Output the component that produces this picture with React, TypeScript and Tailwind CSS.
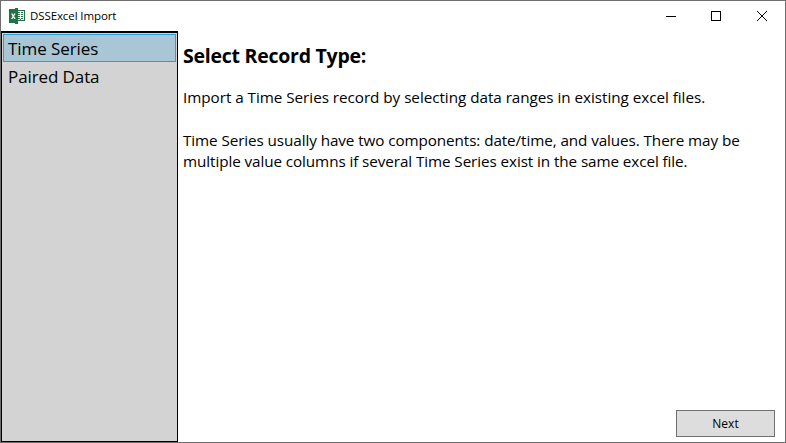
const recordTypes = ["Time Series", "Paired Data"];

function ExcelIcon() {
  return (
    <svg width="16" height="16" viewBox="0 0 16 16" shapeRendering="crispEdges">
      <path d="M9 2h7v11H9z" fill="#217346" />
      <path
        d="M9 3h2v1H9zM12 3h3v1h-3zM9 5h2v1H9zM12 5h2v1h-2zM9 7h2v1H9zM12 7h2v1h-2zM9 9h2v1H9zM12 9h2v1h-2zM9 11h2v1H9zM12 11h3v1h-3zM14 3h1v9h-1zM11 3h1v8h-1z"
        fill="#fff"
      />
      <path d="M0 1.5L9 0v16l-9-1.5z" fill="#217346" />
      <path
        d="M2.7 5.5l3.3 5.5M6 5.5L2.7 11"
        stroke="#fff"
        strokeWidth="1.4"
        shapeRendering="auto"
      />
    </svg>
  );
}

function TitleBar() {
  return (
    <div className="flex h-[30px] items-center pl-2">
      <ExcelIcon />
      <span className="ml-[5px] text-[11.5px] tracking-[-0.1px]">
        DSSExcel Import
      </span>
      <div className="ml-auto flex h-full">
        <button className="flex w-[46px] items-center justify-center">
          <svg width="10" height="10" shapeRendering="crispEdges">
            <path d="M0 5h10v1H0z" />
          </svg>
        </button>
        <button className="flex w-11 items-center justify-center">
          <svg width="10" height="10" shapeRendering="crispEdges">
            <path d="M.5 .5h9v9h-9z" fill="none" stroke="#000" />
          </svg>
        </button>
        <button className="flex w-[47px] items-center justify-center pl-px">
          <svg width="10" height="10">
            <path d="M0 0l10 10M10 0L0 10" fill="none" stroke="#000" />
          </svg>
        </button>
      </div>
    </div>
  );
}

export default function App() {
  return (
    <div className="flex h-[443px] w-[786px] flex-col border border-[#6e6e6e] bg-white font-['Open_Sans','Noto_Sans',sans-serif] text-black">
      <TitleBar />
      <div className="flex min-h-0 flex-1">
        <ul className="w-[177px] border border-t-2 border-black bg-[#d3d3d3] p-px">
          {recordTypes.map((type, i) => (
            <li
              key={type}
              className={
                i === 0
                  ? "h-7 border border-[#26a0da] bg-[#a8c6d5] px-1 text-[17px] leading-[27px] tracking-[-0.07px]"
                  : "h-7 border border-transparent px-1 text-[17px] leading-[27px] tracking-[-0.1px]"
              }
            >
              {type}
            </li>
          ))}
        </ul>
        <div className="flex flex-1 flex-col pl-[5px]">
          <h1 className="mt-[11px] text-[19.5px] leading-[27px] font-bold tracking-[-0.25px]">
            Select Record Type:
          </h1>
          <div className="mt-[18px] text-[15.25px] leading-[21.33px] whitespace-nowrap">
            <p className="tracking-[-0.04px]">
              Import a Time Series record by selecting data ranges in existing
              excel files.
            </p>
            <p className="mt-[21.33px] tracking-[-0.09px]">
              Time Series usually have two components: date/time, and values.
              There may be
              <br />
              multiple value columns if several Time Series exist in the same
              excel file.
            </p>
          </div>
          <button className="mt-auto mr-[10px] mb-[5px] h-[27px] w-[99px] self-end border border-[#707070] bg-[#ddd] text-xs">
            Next
          </button>
        </div>
      </div>
    </div>
  );
}
